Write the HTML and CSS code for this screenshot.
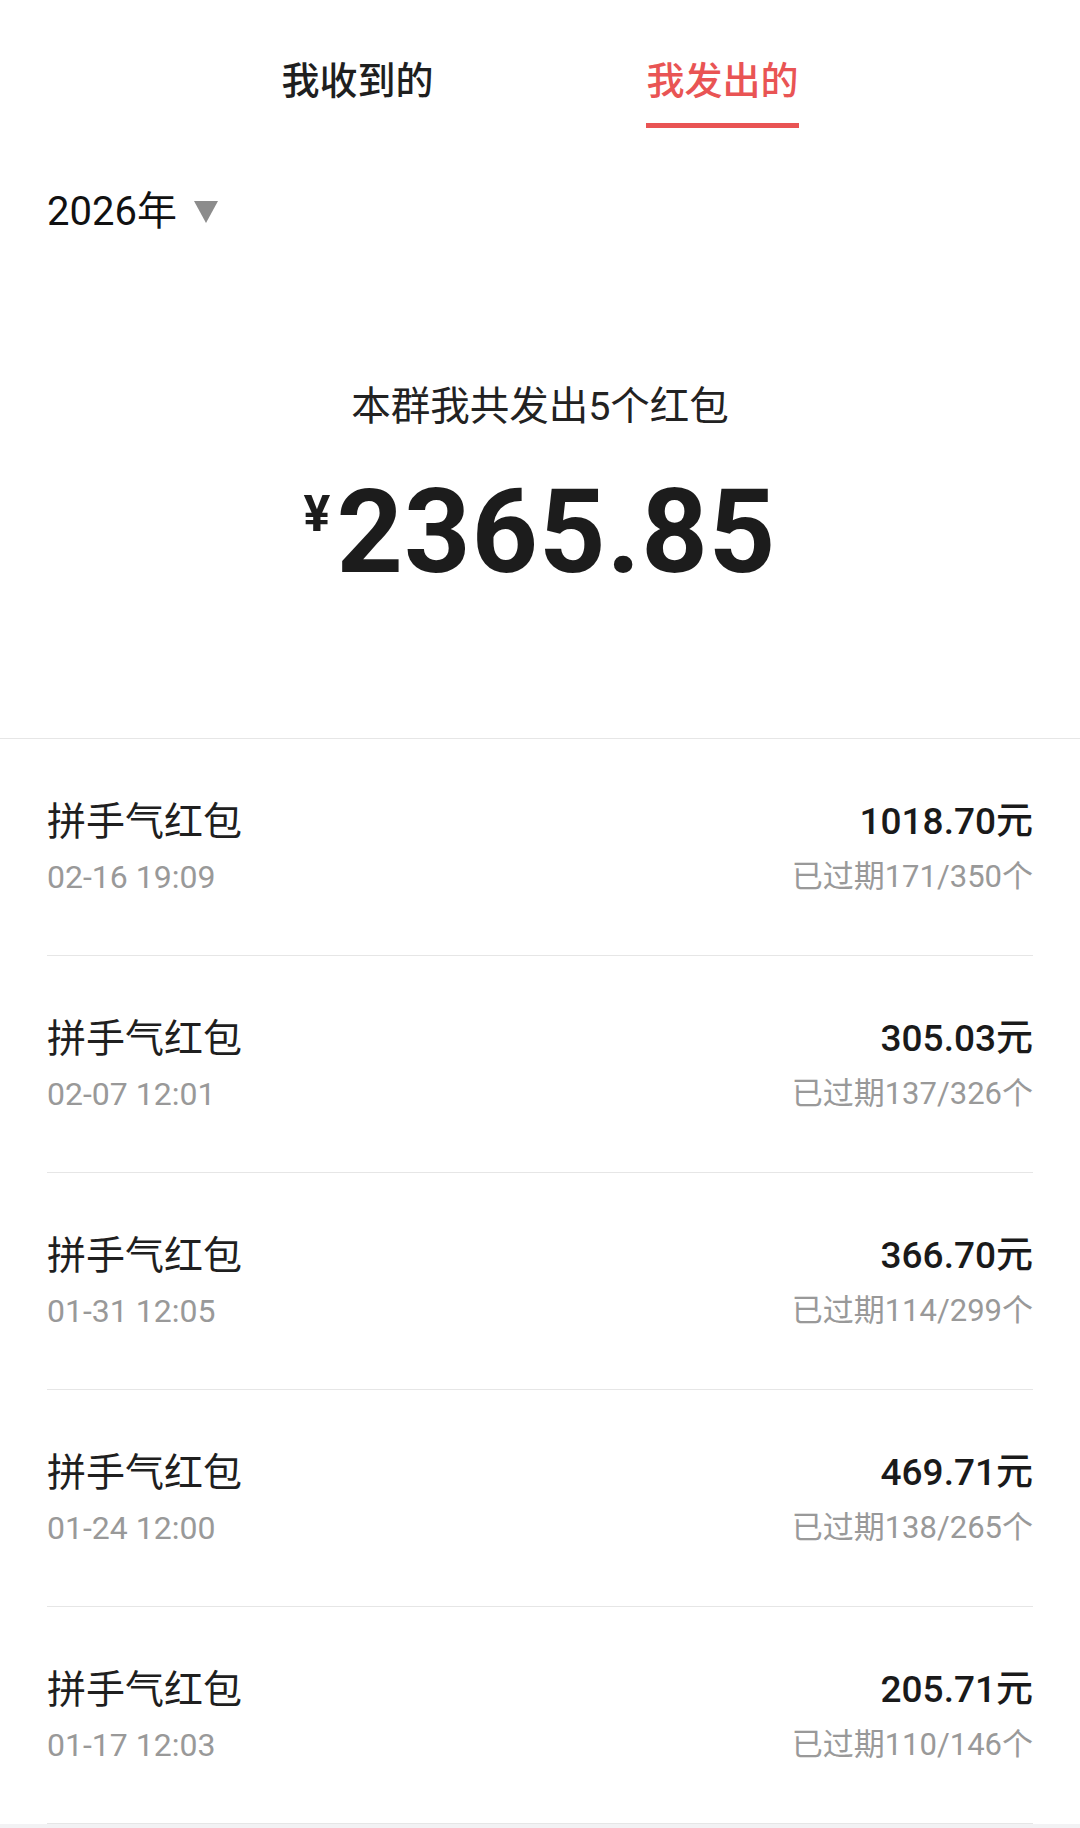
FILE: index.html
```html
<!DOCTYPE html>
<html lang="zh-CN">
    <head>
        <meta charset="UTF-8" />
        <meta name="viewport" content="width=device-width, initial-scale=1.0" />
        <title>红包记录</title>
        <link rel="stylesheet" href="styles.css">
    </head>
    <body>
        <div class="page">
            <!-- Tabs -->
            <div class="tabs">
                <div class="tab"><span class="tabLabel">我收到的</span></div>
                <div class="tab active"><span class="tabLabel">我发出的</span></div>
            </div>

            <!-- Year picker -->
            <div class="yearPicker">
                <span class="yearText">2026年</span>
                <span class="yearArrow"></span>
            </div>

            <!-- Summary -->
            <div class="summary">
                <div class="summaryText">本群我共发出5个红包</div>
                <div class="summaryAmount">
                    <span class="currency">¥</span>
                    <span class="total">2365.85</span>
                </div>
            </div>

            <!-- Record list -->
            <div class="recordList">
                <div class="record">
                    <div class="recordLeft">
                        <div class="recordTitle">拼手气红包</div>
                        <div class="recordTime">02-16 19:09</div>
                    </div>
                    <div class="recordRight">
                        <div class="recordMoney">1018.70元</div>
                        <div class="recordStatus">已过期171/350个</div>
                    </div>
                </div>
                <div class="record">
                    <div class="recordLeft">
                        <div class="recordTitle">拼手气红包</div>
                        <div class="recordTime">02-07 12:01</div>
                    </div>
                    <div class="recordRight">
                        <div class="recordMoney">305.03元</div>
                        <div class="recordStatus">已过期137/326个</div>
                    </div>
                </div>
                <div class="record">
                    <div class="recordLeft">
                        <div class="recordTitle">拼手气红包</div>
                        <div class="recordTime">01-31 12:05</div>
                    </div>
                    <div class="recordRight">
                        <div class="recordMoney">366.70元</div>
                        <div class="recordStatus">已过期114/299个</div>
                    </div>
                </div>
                <div class="record">
                    <div class="recordLeft">
                        <div class="recordTitle">拼手气红包</div>
                        <div class="recordTime">01-24 12:00</div>
                    </div>
                    <div class="recordRight">
                        <div class="recordMoney">469.71元</div>
                        <div class="recordStatus">已过期138/265个</div>
                    </div>
                </div>
                <div class="record">
                    <div class="recordLeft">
                        <div class="recordTitle">拼手气红包</div>
                        <div class="recordTime">01-17 12:03</div>
                    </div>
                    <div class="recordRight">
                        <div class="recordMoney">205.71元</div>
                        <div class="recordStatus">已过期110/146个</div>
                    </div>
                </div>
            </div>
        </div>
    </body>
</html>
```

FILE: styles.css
```css
body {
    margin: 0;
    background-color: #f2f2f4;
    font-family: Roboto, 'Noto Sans CJK SC', sans-serif;
    color: #1f1f1f;
}

.page {
    background-color: #ffffff;
}

/* Tabs */
.tabs {
    display: flex;
    justify-content: center;
    padding-top: 54px;
}
.tab {
    width: 365px;
    text-align: center;
}
.tabLabel {
    display: inline-block;
    font-size: 38px;
    line-height: 54px;
    font-weight: 500;
    color: #1f1f1f;
    padding-bottom: 15px;
    border-bottom: 5px solid transparent;
}
.tab.active .tabLabel {
    color: #e95454;
    border-bottom-color: #e95454;
}

/* Year Picker */
.yearPicker {
    display: flex;
    align-items: center;
    padding: 0 47px;
    margin-top: 57px;
}
.yearText {
    font-size: 40px;
    line-height: 54px;
    color: #111111;
}
.yearArrow {
    width: 0;
    height: 0;
    margin-left: 17px;
    border-left: 12px solid transparent;
    border-right: 12px solid transparent;
    border-top: 22px solid #8c8c8c;
}

/* Summary */
.summary {
    display: flex;
    flex-direction: column;
    align-items: center;
    padding-top: 141px;
    padding-bottom: 138px;
    border-bottom: 1px solid #e6e6e6;
}
.summaryText {
    font-size: 39.5px;
    line-height: 54px;
    color: #222222;
}
.summaryAmount {
    display: flex;
    align-items: flex-start;
    margin-top: 30px;
    color: #1c1c1c;
}
.currency {
    font-weight: 700;
    font-size: 50px;
    line-height: 58px;
    margin-top: 21px;
    margin-right: 6px;
}
.total {
    font-weight: 700;
    font-size: 116px;
    line-height: 136px;
    letter-spacing: 1px;
}

/* Record List */
.recordList {
    padding: 0 47px;
}
.record {
    display: flex;
    justify-content: space-between;
    padding: 56px 0 50px;
    border-bottom: 1px solid #e6e6e6;
}
.recordRight {
    text-align: right;
}
.recordTitle {
    font-size: 39px;
    line-height: 54px;
    color: #1f1f1f;
}
.recordTime,
.recordStatus {
    font-size: 32px;
    line-height: 56px;
    color: #999999;
}
.recordStatus {
    font-size: 31px;
}
.recordMoney {
    font-size: 37px;
    line-height: 54px;
    font-weight: 500;
    color: #1a1a1a;
}
```
